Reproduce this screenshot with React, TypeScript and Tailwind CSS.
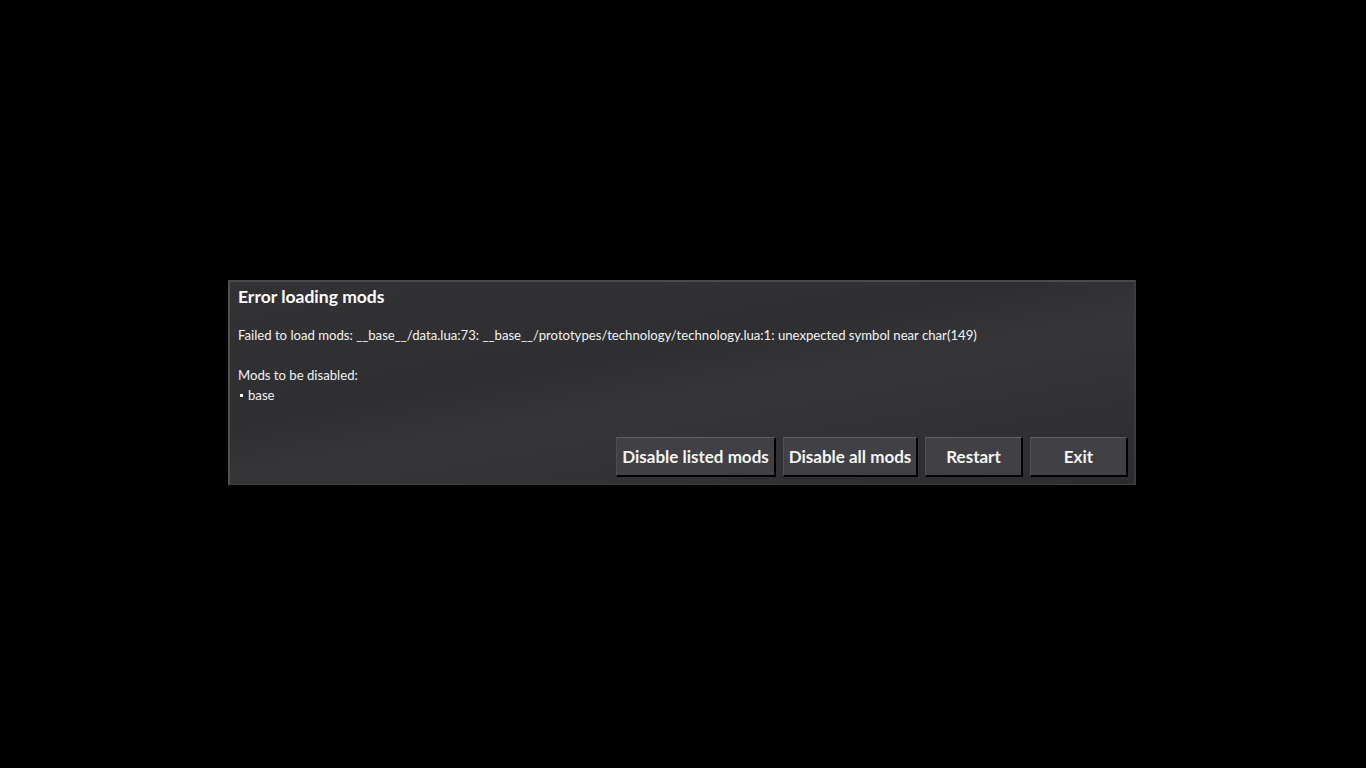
const font = { fontFamily: '"Lato", "Noto Sans", sans-serif' };

const Btn = ({ label, w }: { label: string; w: string }) => (
  <button
    className={`${w} h-[40px] bg-[#414145] border-t border-l border-t-[#606064] border-l-[#505054] border-r-2 border-b-2 border-r-black border-b-black text-[#f4f4f4] font-bold text-[17px] flex items-center justify-center`}
  >
    {label}
  </button>
);

export default function App() {
  return (
    <div className="w-[1366px] h-[768px] bg-black flex items-start justify-center pt-[280px]" style={font}>
      <div className="w-[908px] h-[205px] ml-[-2px] flex flex-col bg-[linear-gradient(170deg,#323235_0%,#2f2f32_40%,#363639_55%,#2c2c2e_100%)] border-t-2 border-t-[#4a4a4c] border-l-2 border-l-[#505052] border-r-2 border-r-[#3c3c3e] border-b border-b-[#3a3a3c] text-white">
        <div className="pl-[8px] pt-[5px] text-[17.5px] font-bold leading-[20px]">Error loading mods</div>
        <div className="pl-[8px] pt-[18px] text-[13.15px] leading-[20px] text-[#f2f2f2]">
          <div>Failed to load mods: __base__/data.lua:73: __base__/prototypes/technology/technology.lua:1: unexpected symbol near char(149)</div>
          <div className="h-[20px]" />
          <div>Mods to be disabled:</div>
          <div className="flex items-center gap-[5px]"><span className="w-[3px] h-[3px] bg-white inline-block ml-[2px]" />base</div>
        </div>
        <div className="flex-1" />
        <div className="flex justify-end gap-[7px] pr-[6px] pb-[7px]">
          <Btn label="Disable listed mods" w="w-[160px]" />
          <Btn label="Disable all mods" w="w-[135px]" />
          <Btn label="Restart" w="w-[98px]" />
          <Btn label="Exit" w="w-[98px]" />
        </div>
      </div>
    </div>
  );
}
